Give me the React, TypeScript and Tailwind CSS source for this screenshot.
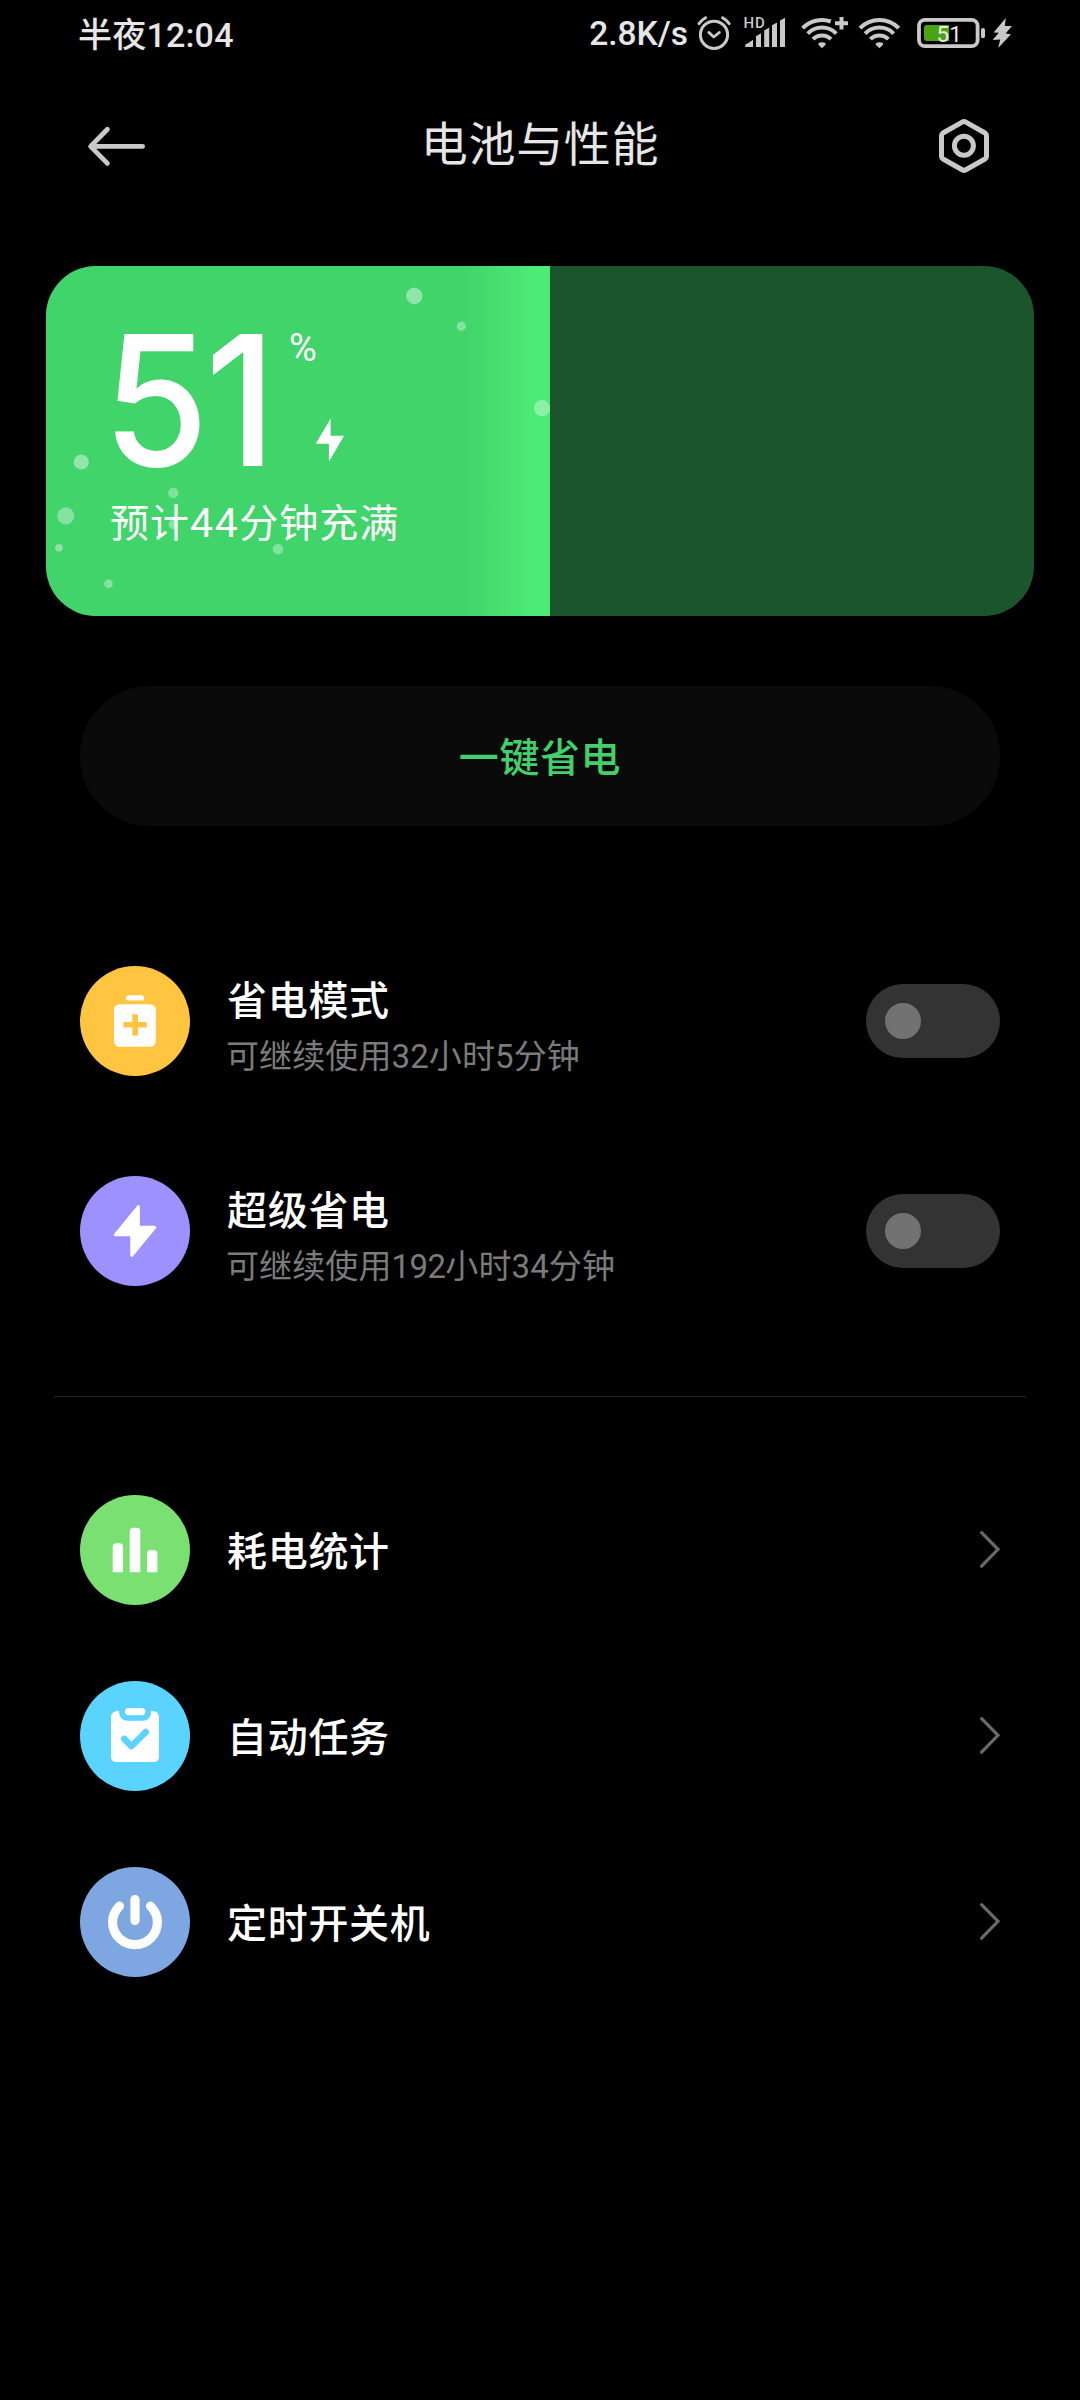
import type { ReactNode } from "react";

const LIGHT = "#c9c9c9";

function AlarmIcon() {
  return (
    <svg className="ml-[8px] h-[40px] w-[36px]" viewBox="695 15 36 40" fill="none" stroke={LIGHT} strokeWidth="3" strokeLinecap="round" strokeLinejoin="round">
      <circle cx="713" cy="34.8" r="13.6" />
      <path d="M707.8 32.4 712.8 37 718.4 32.4" strokeWidth="2.8" />
      <path d="M698 23.6Q700.5 20 704.6 17.8M728.2 23.6Q725.7 20 721.6 17.8" />
    </svg>
  );
}

function SignalIcon() {
  return (
    <svg className="ml-[11px] h-[40px] w-[44px]" viewBox="742 15 44 40" fill={LIGHT}>
      <text x="742.6" y="28" fontFamily="Roboto, sans-serif" fontSize="15" fontWeight="500" letterSpacing="0.8">HD</text>
      <path d="M744.3 47V44.5Q748 43 752 39.8V47ZM755 47V36.2L760 33.2V47ZM763.2 47V30.5L768.2 27.5V47ZM771 47V25.2L776 22.6V47ZM779 47V20.4L784 17.8V47Z" />
    </svg>
  );
}

function WifiPlusIcon() {
  return (
    <svg className="ml-[13px] h-[40px] w-[48px]" viewBox="799 15 48 40" fill="none" stroke={LIGHT} strokeWidth="4">
      <path d="M801.6 28.2A27 27 0 0 1 829.8 21.5" />
      <path d="M806.7 33.6A20 20 0 0 1 835.3 33.6" />
      <path d="M812 39.2A12.6 12.6 0 0 1 830 39.2" />
      <path d="M821 42.2Q824.8 42.2 824.8 44.5L821 48.2 817.2 44.5Q817.2 42.2 821 42.2Z" fill={LIGHT} stroke="none" />
      <path d="M834 23.2H847M840.5 17V29.4" />
    </svg>
  );
}

function WifiIcon() {
  return (
    <svg className="ml-[10px] h-[40px] w-[43px]" viewBox="857 15 43 40" fill="none" stroke={LIGHT} strokeWidth="4">
      <path d="M859 28.2A27 27 0 0 1 897.8 28.2" />
      <path d="M864.1 33.6A20 20 0 0 1 892.7 33.6" />
      <path d="M869.4 39.2A12.6 12.6 0 0 1 887.4 39.2" />
      <path d="M878.4 42.2Q882.2 42.2 882.2 44.5L878.4 48.2 874.6 44.5Q874.6 42.2 878.4 42.2Z" fill={LIGHT} stroke="none" />
    </svg>
  );
}

function BatteryIcon() {
  return (
    <svg className="ml-[15px] h-[40px] w-[70px]" viewBox="914 15 70 40">
      <rect x="917" y="19.8" width="58.6" height="26.4" rx="6" fill="none" stroke={LIGHT} strokeWidth="3.8" />
      <rect x="979" y="28" width="4" height="10.2" rx="2" fill={LIGHT} />
      <path d="M925 25H947V41H925Q922 41 922 38V28Q922 25 925 25Z" fill="#4aa312" />
      <text x="934.6" y="41.8" fontFamily="Roboto, sans-serif" fontSize="22.5" fontWeight="400" fill="#ececec">51</text>
    </svg>
  );
}

function StatusBolt() {
  return (
    <svg className="ml-[6px] h-[40px] w-[20px]" viewBox="990 15 20 40" fill={LIGHT}>
      <path d="M1003.8 18 991.6 32.4 996.8 32.8 990.6 40 998.2 39.6 996.2 48 1009 34.2 1003.6 33.4 1010 26 1002.8 26Z" />
    </svg>
  );
}

function StatusBar() {
  return (
    <div className="flex h-[70px] items-center pl-[78px] text-[34px] leading-[40px] font-medium text-[#e6e6e6]">
      <span className="tracking-[0.2px]">半夜12:04</span>
      <span className="-mt-[2px] ml-auto text-[33.5px]">2.8K/s</span>
      <div className="mr-[68px] flex">
        <AlarmIcon />
        <SignalIcon />
        <WifiPlusIcon />
        <WifiIcon />
        <BatteryIcon />
        <StatusBolt />
      </div>
    </div>
  );
}

function TitleBar() {
  return (
    <header className="flex h-[150px] items-center justify-between px-[86px]">
      <svg className="h-[60px] w-[62px]" viewBox="86 115 62 60" fill="none" stroke={LIGHT} strokeWidth="4.8" strokeLinecap="round" strokeLinejoin="round">
        <path d="M142.6 146.4H91M107.4 129.2 90.6 146.4 107.4 163.4" />
      </svg>
      <h1 className="text-[47px] leading-[60px] font-normal tracking-[0.7px] text-[#e6e6e6]">电池与性能</h1>
      <svg className="h-[60px] w-[62px]" viewBox="932 115 62 60" fill="none" stroke={LIGHT} strokeWidth="5" strokeLinejoin="round">
        <path d="M962.6 121.8Q964 121.1 965.4 121.8L985 133Q986.5 134 986.5 135.6V156.4Q986.5 158 985 159L965.4 170Q964 170.8 962.6 170L943 159Q941.5 158 941.5 156.4V135.6Q941.5 134 943 133Z" />
        <circle cx="963.9" cy="145.8" r="9.5" />
      </svg>
    </header>
  );
}

const bubbles = [
  { x: 414.3, y: 296, r: 8.2, o: 0.42 },
  { x: 461.3, y: 326.3, r: 4.6, o: 0.36 },
  { x: 542, y: 408.3, r: 8.2, o: 0.34 },
  { x: 81.3, y: 462, r: 7.6, o: 0.42 },
  { x: 173.3, y: 492.7, r: 5.2, o: 0.34 },
  { x: 65.8, y: 516, r: 8.5, o: 0.36 },
  { x: 173.3, y: 524.5, r: 4.7, o: 0.36 },
  { x: 59, y: 547.7, r: 3.8, o: 0.4 },
  { x: 278, y: 549.3, r: 5.3, o: 0.34 },
  { x: 108.5, y: 583.7, r: 4.3, o: 0.36 },
];

function BatteryCard() {
  return (
    <section className="relative mx-[46px] mt-[46px] h-[350px] overflow-hidden rounded-[50px] bg-[#1b552c]">
      <div className="relative h-full w-[504px] bg-[linear-gradient(90deg,#41d46a_83%,#4ceb76_97%)] pt-[68px] pl-[64px] text-white">
        <svg className="absolute inset-0 h-[350px] w-[504px]" viewBox="46 266 504 350" fill="#fff">
          {bubbles.map((b) => (
            <circle key={`${b.x}-${b.y}`} cx={b.x} cy={b.y} r={b.r} fillOpacity={b.o} />
          ))}
        </svg>
        <div className="relative flex h-[134px]">
          <span className="-mt-[1px] -ml-[7px] w-[186px] origin-left scale-x-[0.94] font-['Inter','Roboto',sans-serif] text-[182px] leading-[134px] font-medium tracking-[-4px]">51</span>
          <span className="h-[28px] text-[38px] leading-[28px] font-normal">%</span>
          <svg className="mt-[83px] -ml-[2px] h-[46px] w-[30px]" viewBox="315 417 30 46" fill="#fff">
            <path d="M330.6 418.6 315.8 443.7H328.9V461.8L344.1 435.7H330.6Z" />
          </svg>
        </div>
        <p className="relative mt-[30px] text-[39px] leading-[50px] font-normal tracking-[1px]">
          预计<span className="text-[41px] tracking-[1.6px]">44</span>分钟充满
        </p>
      </div>
    </section>
  );
}

function IconDisc({ className, children }: { className: string; children: ReactNode }) {
  return (
    <div className={`h-[110px] w-[110px] shrink-0 rounded-full ${className}`}>
      <svg className="h-[110px] w-[110px]" viewBox="0 0 110 110" fill="#fff">
        {children}
      </svg>
    </div>
  );
}

function Toggle() {
  return (
    <div className="ml-auto flex h-[74px] w-[134px] items-center rounded-full bg-[#333333] pl-[19px]">
      <div className="h-[36px] w-[36px] rounded-full bg-[#727272]" />
    </div>
  );
}

function ModeRow({ icon, title, children }: { icon: ReactNode; title: string; children: ReactNode }) {
  return (
    <div className="flex h-[110px] items-center">
      {icon}
      <div className="ml-[36px] pt-[17px]">
        <div className="pl-px text-[40px] leading-[54px] font-medium tracking-[0.7px] text-white">{title}</div>
        <div className="text-[33px] leading-[56px] font-normal tracking-[0.1px] text-[#7b7b7b]">{children}</div>
      </div>
      <Toggle />
    </div>
  );
}

function LinkRow({ icon, title }: { icon: ReactNode; title: string }) {
  return (
    <div className="flex h-[110px] items-center">
      {icon}
      <div className="ml-[37px] pt-[6px] text-[40px] leading-[54px] font-medium tracking-[0.7px] text-white">{title}</div>
      <svg className="ml-auto h-[40px] w-[21px]" viewBox="979 1530 21 40" fill="none" stroke="#696969" strokeWidth="3.2" strokeLinecap="round">
        <path d="M981.6 1532.6 998 1549.3 981.6 1566.2" />
      </svg>
    </div>
  );
}

export default function App() {
  return (
    <main className="flex h-[2400px] w-[1080px] flex-col overflow-hidden bg-black font-['Roboto','Noto_Sans_CJK_SC',sans-serif]">
      <StatusBar />
      <TitleBar />
      <BatteryCard />

      <button className="mx-[80px] mt-[70px] h-[140px] rounded-[70px] bg-[#0a0a0a] pt-[5px] text-[40px] font-medium tracking-[0.6px] text-[#43cf6b]">
        一键省电
      </button>

      <div className="mt-[140px] flex flex-col gap-[100px] px-[80px]">
        <ModeRow
          title="省电模式"
          icon={
            <IconDisc className="bg-[#ffc541]">
              <rect x="46" y="29.2" width="18" height="5.4" rx="2.6" />
              <rect x="34" y="38.2" width="41.8" height="42.6" rx="5.5" />
              <path d="M43.4 56.4Q43.4 56 43.8 56H52.3V48.8Q52.3 48.3 52.8 48.3H57.5Q58 48.3 58 48.8V56H66.4Q66.9 56 66.9 56.5V61.1Q66.9 61.6 66.4 61.6H58V69Q58 69.5 57.5 69.5H52.8Q52.3 69.5 52.3 69V61.6H43.9Q43.4 61.6 43.4 61.1Z" fill="#ffc541" />
            </IconDisc>
          }
        >
          可继续使用32小时5分钟
        </ModeRow>
        <ModeRow
          title="超级省电"
          icon={
            <IconDisc className="bg-[#9d90ff]">
              <path d="M58.4 30.6V51.2H74.8L51.8 79.4V58.8H35.4Z" stroke="#fff" strokeWidth="3" strokeLinejoin="round" />
            </IconDisc>
          }
        >
          可继续使用<span className="tracking-[-0.6px]">192</span>小时34分钟
        </ModeRow>
      </div>

      <hr className="mx-[54px] mt-[110px] h-px border-0 bg-[#242424]" />

      <div className="mt-[98px] flex flex-col gap-[76px] px-[80px]">
        <LinkRow
          title="耗电统计"
          icon={
            <IconDisc className="bg-[#7ae071]">
              <path d="M32.7 77.3V52Q32.7 48.3 36.4 48.3H39.4Q43.1 48.3 43.1 52V77.3ZM49.7 77.3V36.4Q49.7 32.7 53.4 32.7H56.6Q60.3 32.7 60.3 36.4V77.3ZM67 77.3V58.7Q67 55 70.7 55H73.7Q77.4 55 77.4 58.7V77.3Z" />
            </IconDisc>
          }
        />
        <LinkRow
          title="自动任务"
          icon={
            <IconDisc className="bg-[#5bd3ff]">
              <path d="M39 29.7Q39 39.8 48 39.8H62.4Q71.3 39.8 71.3 29.7Q79 30 79 36.5V75.5Q79 81 73.5 81H36.5Q31 81 31 75.5V36.5Q31 30 39 29.7Z" />
              <rect x="45" y="27" width="20.4" height="7.2" rx="3.6" />
              <path d="M44.2 57.8 51.4 65.2 65.8 51" fill="none" stroke="#5bd3ff" strokeWidth="6.4" strokeLinecap="round" strokeLinejoin="round" />
            </IconDisc>
          }
        />
        <LinkRow
          title="定时开关机"
          icon={
            <IconDisc className="bg-[#7ea6e0]">
              <path d="M39.4 39.2A22.4 22.4 0 1 0 70.6 39.2M55 32.6V53.6" fill="none" stroke="#fff" strokeWidth="9.2" strokeLinecap="round" />
            </IconDisc>
          }
        />
      </div>
    </main>
  );
}
